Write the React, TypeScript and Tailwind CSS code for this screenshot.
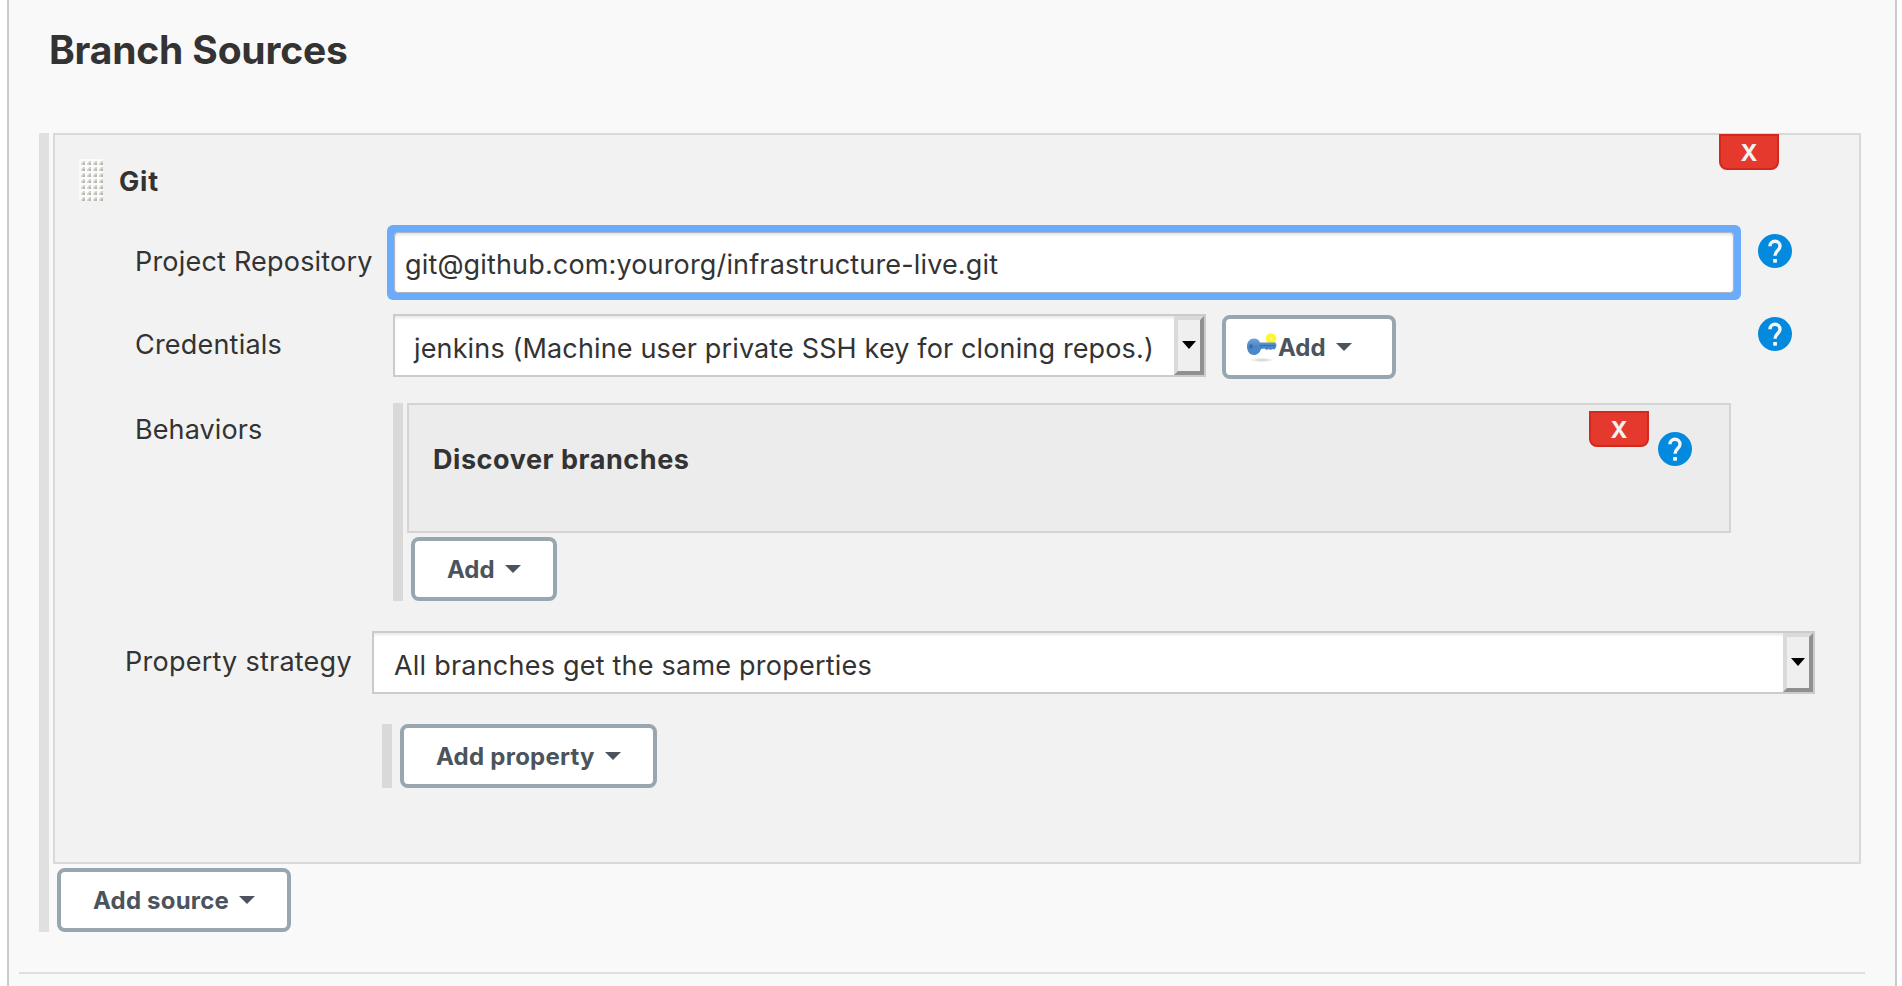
import React from "react";

function Caret() {
  return (
    <svg className="block h-2 w-4 shrink-0" viewBox="0 0 16 8" fill="#4b545d">
      <path d="M0 0h16L8 8z" />
    </svg>
  );
}

function MenuButton({ label, className, textClass, icon }: { label: string; className: string; textClass: string; icon?: React.ReactNode }) {
  return (
    <button className={`flex h-16 shrink-0 items-center rounded-[8px] border-4 border-[#98a6b0] bg-white text-left text-[24px] font-bold leading-7 text-[#4b545d] ${className}`}>
      {icon}
      <span className={`-ml-px whitespace-nowrap pt-0.5 ${textClass}`}>{label}</span>
      <Caret />
    </button>
  );
}

function DeleteButton({ className }: { className: string }) {
  return (
    <button className={`h-9 w-[60px] rounded-b-[8px] border-2 border-[#d3291c] bg-[#e6392d] pt-0.5 text-[23px] font-bold leading-7 text-[#f2f2f2] ${className}`}>
      X
    </button>
  );
}

function Help({ className }: { className: string }) {
  return (
    <svg className={`block h-[34px] w-[34px] shrink-0 ${className}`} viewBox="0 0 34 34">
      <circle cx="17" cy="17" r="17" fill="#038ade" />
      <path d="M12 12.2a5 5 0 0 1 10 0c0 4.2-5 4.4-5 9.6" fill="none" stroke="#f5f5f5" strokeWidth="3.4" />
      <path d="M15.2 25h3.7v3.7h-3.7z" fill="#f5f5f5" />
    </svg>
  );
}

function Grip() {
  const cells: React.ReactNode[] = [];
  for (let r = 0; r < 7; r++) {
    for (let c = 0; c < 4; c++) {
      cells.push(
        <g key={`${r}-${c}`} transform={`translate(${c * 6} ${r * 6})`}>
          <path d="M2 6V4.5L4.5 2H6v4z" fill="#d2d2ce" />
          <path d="M4 6V4.5L4.5 4H6v2z" fill="#b4b4ae" />
        </g>
      );
    }
  }
  return (
    <svg className="block h-[42px] w-6 shrink-0" viewBox="0 0 24 42">
      <path d="M0 0h24v42H0z" fill="#fbfbf9" />
      {cells}
    </svg>
  );
}

function KeyIcon() {
  return (
    <svg className="block h-8 w-8 shrink-0" viewBox="0 0 32 32">
      <defs>
        <radialGradient id="shade">
          <stop offset="0" stopColor="#000" stopOpacity=".2" />
          <stop offset="1" stopColor="#000" stopOpacity="0" />
        </radialGradient>
        <radialGradient id="spark">
          <stop offset="0" stopColor="#fffcc0" />
          <stop offset=".35" stopColor="#fff52e" />
          <stop offset=".75" stopColor="#fff52e" />
          <stop offset="1" stopColor="#fff52e" stopOpacity="0" />
        </radialGradient>
        <linearGradient id="steel" x1="0" y1="0" x2="0" y2="1">
          <stop offset="0" stopColor="#6fa3da" />
          <stop offset=".5" stopColor="#4a85c7" />
          <stop offset="1" stopColor="#5089ca" />
        </linearGradient>
      </defs>
      <ellipse cx="15" cy="29" rx="13" ry="2.2" fill="url(#shade)" />
      <circle cx="24" cy="7.500" r="6" fill="url(#spark)" />
      <path d="M7 7.500c3 0 5 1.500 6 4h15.500l1 2-.5 3-1.500 2-2-.6-2 1-2-1-2 1-2-1.400-3.500.5c-1 3.500-3.500 6-7 6-4 0-7-3.500-7-8.500s3-8 7-8z" fill="url(#steel)" />
      <ellipse cx="4" cy="15.500" rx="1.500" ry="2.200" fill="#3f6593" />
      <path d="M13 14.500h15" stroke="#3a70b0" strokeWidth="1.200" />
    </svg>
  );
}

function SelectBox({ text, className, textClass }: { text: string; className: string; textClass: string }) {
  return (
    <div className={`flex h-[63px] shrink-0 border-2 border-[#cbcbcb] bg-white shadow-[inset_0_3px_3px_-1px_#e8e8e8] ${className}`}>
      <span className={`flex-1 whitespace-nowrap pt-[17px] leading-8 ${textClass}`}>{text}</span>
      <span className="flex h-[59px] w-[30px] items-center justify-center border-4 border-b-[#909090] border-l-[#dadada] border-r-[#909090] border-t-[#dadada] bg-[#efefef]">
        <svg className="mb-0.5 block h-2 w-[14px]" viewBox="0 0 14 8">
          <path d="M0 0h14L7 8z" />
        </svg>
      </span>
    </div>
  );
}

export default function App() {
  return (
    <div className="h-[986px] w-[1902px] overflow-hidden bg-white pl-[7px] font-['Inter',sans-serif] text-[27px] leading-8 text-[#333]">
      <div className="h-full w-[1890px] border-x-2 border-[#cbcbcb] bg-[#f9f9f9]">
        <h1 className="h-[133px] pl-10 pt-[26px] text-[39px] font-bold leading-[48px] tracking-[-0.18px]">Branch Sources</h1>

        <div className="ml-[30px] flex h-[799px] w-[1822px] border-l-[10px] border-[#e0e0e0] pl-1">
          <div>
            <div className="h-[731px] w-[1808px] border-2 border-[#d9d9d9] bg-[#f2f2f2]">
              <div className="flex h-[90px] items-start pl-6">
                <div className="pt-6"><Grip /></div>
                <h2 className="ml-4 pt-[31px] font-bold tracking-[0.8px]">Git</h2>
                <DeleteButton className="-mt-px ml-auto mr-20" />
              </div>

              <div className="flex h-[75px] pl-20">
                <label className="w-[252px] whitespace-nowrap pt-[21px] tracking-[0.2px]">Project Repository</label>
                <div className="h-[75px] w-[1354px] rounded-[6px] bg-[#6babfb] p-[7px]">
                  <div className="h-[61px] rounded-[4px] border border-[#a9b4c4] bg-white pl-2.5 pt-4 tracking-[0.15px] shadow-[inset_0_2px_3px_#e4e4e4]">git@github.com:yourorg/infrastructure-live.git</div>
                </div>
                <Help className="ml-[17px] mt-[9px]" />
              </div>

              <div className="mt-[14px] flex h-[89px] pl-20">
                <label className="w-[258px] pt-[15px] tracking-[0.2px]">Credentials</label>
                <SelectBox text="jenkins (Machine user private SSH key for cloning repos.)" className="w-[813px]" textClass="pl-[19px] tracking-[0.14px]" />
                <MenuButton label="Add" className="ml-4 mt-px w-[174px] pl-[21px]" textClass="w-[58px]" icon={<KeyIcon />} />
                <Help className="ml-[362px] mt-[3px]" />
              </div>

              <div className="flex h-[198px] pl-20">
                <label className="w-[258px] pt-[11px] tracking-[0.1px]">Behaviors</label>
                <div className="flex border-l-[10px] border-[#d9d9d9] pl-1">
                  <div>
                    <div className="flex h-[130px] w-[1324px] border-2 border-[#d4d4d4] bg-[#ececec] pl-6">
                      <h3 className="flex-1 pt-[39px] font-bold tracking-[0.55px]">Discover branches</h3>
                      <DeleteButton className="mt-1.5" />
                      <Help className="ml-[9px] mr-[37px] mt-[27px]" />
                    </div>
                    <MenuButton label="Add" className="ml-1 mt-1 w-[146px] pl-[33px]" textClass="w-[58px]" />
                  </div>
                </div>
              </div>

              <div className="mt-[30px] flex h-[63px] pl-[70px]">
                <label className="w-[247px] pt-[15px] tracking-[0.25px]">Property strategy</label>
                <SelectBox text="All branches get the same properties" className="w-[1443px]" textClass="pl-5 tracking-[0.22px]" />
              </div>

              <div className="ml-[327px] mt-[30px] border-l-[10px] border-[#d9d9d9] pl-2">
                <MenuButton label="Add property" className="w-[257px] pl-[33px]" textClass="w-[169px] tracking-[0.25px]" />
              </div>
            </div>
            <MenuButton label="Add source" className="ml-1 mt-1 w-[234px] pl-[33px]" textClass="w-[146px] tracking-[0.2px]" />
          </div>
        </div>

        <div className="ml-2.5 mt-10 h-0.5 w-[1846px] bg-[#dfdfdf]" />
      </div>
    </div>
  );
}
